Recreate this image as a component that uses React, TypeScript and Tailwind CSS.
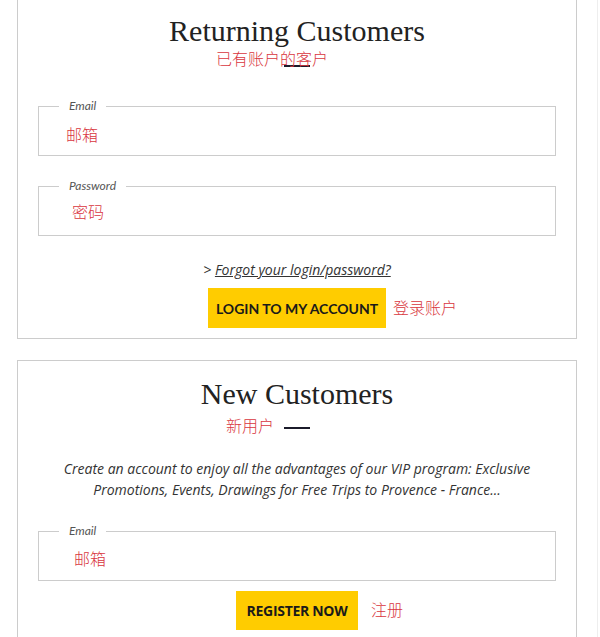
import React from "react";

const serif = { fontFamily: '"Liberation Serif", "DejaVu Serif", serif' };
const cjk = '"Noto Sans CJK SC", sans-serif';
const body = { fontFamily: '"Open Sans", sans-serif' };

function Note({ text, className }: { text: string; className: string }) {
  return (
    <span
      className={`absolute whitespace-nowrap text-[16px] leading-[22px] font-light text-[#d9363e] ${className}`}
      style={{ fontFamily: cjk }}
    >
      {text}
    </span>
  );
}

function Field({ label, note, noteClass }: { label: string; note: string; noteClass: string }) {
  return (
    <fieldset className="border border-[#cccccc] min-w-0">
      <legend className="ml-[20px] px-[10px] text-[12px] leading-[16px] italic text-[#555]" style={{ fontFamily: "Lato, sans-serif" }}>
        {label}
      </legend>
      <div className={`h-[41px] flex items-center ${noteClass}`}>
        <span className="text-[16px] leading-[22px] font-light text-[#d9363e]" style={{ fontFamily: cjk }}>
          {note}
        </span>
      </div>
    </fieldset>
  );
}

export default function App() {
  return (
    <div className="w-[598px] min-h-[637px] bg-white border-r border-[#eeeeee] pl-[17px]">
      {/* returning customers */}
      <section className="w-[560px] border-x border-b border-[#cccccc] px-[20px] pt-[15px] pb-[10px]">
        <h2 className="text-center text-[30px] leading-[32px] text-[#222]" style={serif}>
          Returning Customers
        </h2>
        <div className="relative h-[2px] mt-[18px]">
          <div className="mx-auto w-[26px] h-[2px] bg-[#1b1b2a]" />
          <Note text="已有账户的客户" className="left-[178px] -top-[18px]" />
        </div>

        <div className="mt-[31px]">
          <Field label="Email" note="邮箱" noteClass="pl-[27px] pb-[1px]" />
        </div>
        <div className="mt-[22px]">
          <Field label="Password" note="密码" noteClass="pl-[33px] pb-[8px]" />
        </div>

        <p className="mt-[24px] text-center text-[14px] leading-[20px] italic text-[#333]" style={body}>
          &gt; <a href="#" className="underline">Forgot your login/password?</a>
        </p>

        <div className="mt-[8px] flex justify-center">
          <div className="relative">
            <button
              className="w-[178px] h-[40px] bg-[#ffcc00] text-[14px] font-bold text-[#1a1a1a]"
              style={{ fontFamily: "Lato, sans-serif" }}
            >
              LOGIN TO MY ACCOUNT
            </button>
            <Note text="登录账户" className="left-full ml-[7px] top-[8px]" />
          </div>
        </div>
      </section>

      {/* new customers */}
      <section className="mt-[21px] w-[560px] border border-[#cccccc] px-[20px] pt-[17px] pb-[20px]">
        <h2 className="text-center text-[30px] leading-[32px] text-[#222]" style={serif}>
          New Customers
        </h2>
        <div className="relative h-[2px] mt-[17px]">
          <div className="mx-auto w-[26px] h-[2px] bg-[#1b1b2a]" />
          <Note text="新用户" className="left-[188px] -top-[13px]" />
        </div>

        <p className="mt-[29px] px-[18px] text-center text-[14px] leading-[21px] italic text-[#333]" style={body}>
          Create an account to enjoy all the advantages of our VIP program: Exclusive Promotions, Events, Drawings for Free Trips to Provence - France...
        </p>

        <div className="mt-[23px]">
          <Field label="Email" note="邮箱" noteClass="pl-[35px] pb-[4px]" />
        </div>

        <div className="mt-[10px] flex justify-center">
          <div className="relative">
            <button
              className="w-[122px] h-[39px] bg-[#ffcc00] text-[14px] font-bold text-[#1a1a1a] tracking-[-0.3px]"
              style={body}
            >
              REGISTER NOW
            </button>
            <Note text="注册" className="left-full ml-[13px] top-[7px]" />
          </div>
        </div>
      </section>
    </div>
  );
}
